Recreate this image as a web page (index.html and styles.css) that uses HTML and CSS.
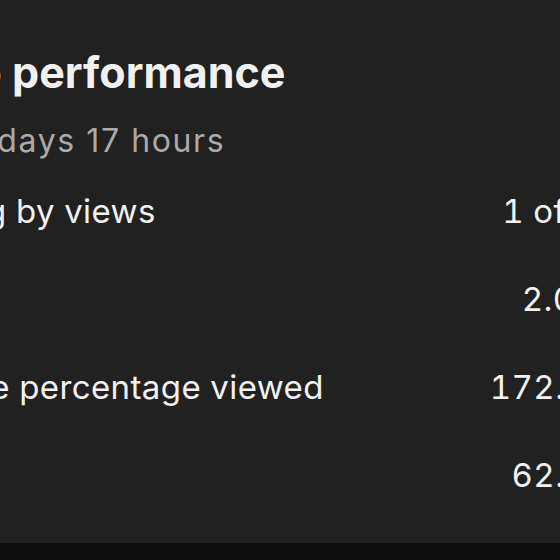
FILE: index.html
```html
<!DOCTYPE html>
<html lang="en">
<head>
<meta charset="utf-8">
<title>Video performance</title>
<link rel="stylesheet" href="styles.css">
</head>
<body>
<div class="screen">
  <main class="content">
    <h1 class="title">Video performance</h1>
    <p class="subtitle">First 2 days 17 hours</p>
    <ul class="stats">
      <li class="stat"><span class="label">Ranking by views</span><span class="value">1 of 10</span></li>
      <li class="stat"><span class="label">Views</span><span class="value">2.05K</span></li>
      <li class="stat"><span class="label">Average percentage viewed</span><span class="value">172.1%</span></li>
      <li class="stat"><span class="label">Likes</span><span class="value">62.5%</span></li>
    </ul>
  </main>
  <footer class="bottom-bar"></footer>
</div>
</body>
</html>
```
FILE: styles.css
```css
html, body {
  margin: 0;
  padding: 0;
  background: #212121;
}
body {
  overflow: hidden;
  font-family: Inter, "Noto Sans", "Liberation Sans", sans-serif;
  color: #f1f1f1;
}
.screen {
  width: 560px;
  height: 560px;
  display: flex;
  flex-direction: column;
  overflow: hidden;
}
.content {
  flex: 1;
  width: 740px;
  margin-left: -121px;
  padding-top: 48px;
  box-sizing: border-box;
}
.title {
  margin: 0;
  font-size: 43px;
  line-height: 48px;
  font-weight: 700;
}
.subtitle {
  margin: 27px 0 0 2px;
  font-size: 32px;
  line-height: 36px;
  letter-spacing: 1.6px;
  color: #aaaaaa;
}
.stats {
  list-style: none;
  margin: 32px 0 0;
  padding: 0;
  display: flex;
  flex-direction: column;
  gap: 48px;
}
.stat {
  display: flex;
  justify-content: space-between;
  font-size: 33px;
  line-height: 40px;
  letter-spacing: 0.4px;
  font-variant-numeric: tabular-nums;
}
.label {
  margin-left: 0;
}
.value {
  text-align: right;
}
.bottom-bar {
  height: 17px;
  background: #0f0f0f;
  flex: none;
}
```
